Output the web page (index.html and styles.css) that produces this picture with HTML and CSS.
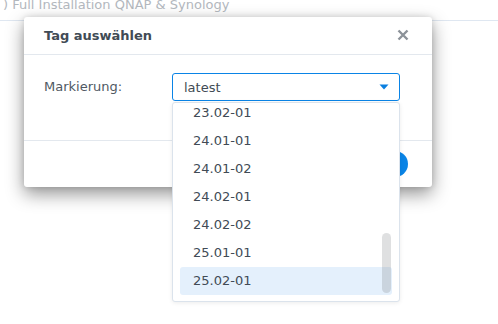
FILE: index.html
```html
<!DOCTYPE html>
<html>
<head>
<meta charset="utf-8">
<link rel="stylesheet" href="styles.css">
</head>
<body>
<div class="page-header"><span class="page-title">) Full Installation QNAP &amp; Synology</span></div>

<div class="dialog">
  <div class="dlg-head">
    <span class="dlg-title">Tag auswählen</span>
    <svg class="close" width="12" height="12" viewBox="0 0 12 12"><path d="M1.5 1.5 L10.5 10.5 M10.5 1.5 L1.5 10.5" stroke="#8c9299" stroke-width="2.4" stroke-linecap="butt"/></svg>
  </div>
  <div class="dlg-body">
    <label class="field-label">Markierung:</label>
    <div class="select">
      <span class="select-value">latest</span>
      <svg class="arrow" width="10" height="6" viewBox="0 0 10 6"><path d="M0.5 0.5 H9.5 L5 5.5 Z" fill="#0a7fe0"/></svg>
    </div>
  </div>
  <div class="dlg-foot">
    <button class="btn-primary">OK</button>
  </div>
</div>

<div class="dropdown">
  <ul class="options">
    <li>23.02-01</li>
    <li>24.01-01</li>
    <li>24.01-02</li>
    <li>24.02-01</li>
    <li>24.02-02</li>
    <li>25.01-01</li>
    <li class="active">25.02-01</li>
  </ul>
  <div class="scrollbar"></div>
</div>
</body>
</html>
```

FILE: styles.css
```css
* { box-sizing: border-box; }
html, body {
  margin: 0;
  padding: 0;
  background: #ffffff;
  width: 498px;
  height: 324px;
  overflow: hidden;
  font-family: "DejaVu Sans", Verdana, sans-serif;
  font-size: 13px;
}
.page-header {
  height: 21px;
  border-bottom: 1px solid #dfe7f1;
  overflow: hidden;
}
.page-title {
  display: block;
  margin-top: -3px;
  padding-left: 3px;
  line-height: 16px;
  color: #b3b8be;
  white-space: nowrap;
}
.dialog {
  position: absolute;
  left: 24px;
  top: 17px;
  width: 408px;
  height: 170px;
  background: #fff;
  border-radius: 3px;
  box-shadow: 0 7px 18px rgba(0, 0, 0, 0.42), 0 0 6px rgba(0, 0, 0, 0.12);
  display: flex;
  flex-direction: column;
}
.dlg-head {
  height: 38px;
  border-bottom: 1px solid #e3e8ee;
  display: flex;
  align-items: center;
  justify-content: space-between;
  padding: 0 23px 1px 20px;
}
.dlg-title {
  font-weight: bold;
  color: #414b55;
}
.close { display: block; }
.dlg-body {
  height: 85px;
  display: flex;
  align-items: flex-start;
  padding: 18px 0 0 20px;
}
.field-label {
  width: 128px;
  line-height: 28px;
  color: #4f5963;
}
.select {
  width: 228px;
  height: 28px;
  border: 1px solid #0a84e6;
  border-radius: 3px;
  display: flex;
  align-items: center;
  justify-content: space-between;
  padding: 0 10px 0 11px;
  color: #414b55;
}
.arrow { display: block; }
.dlg-foot {
  flex: 1;
  border-top: 1px solid #e3e8ee;
  display: flex;
  justify-content: flex-end;
  align-items: flex-start;
  padding: 10px 24px 0 0;
}
.btn-primary {
  height: 26px;
  min-width: 64px;
  border: none;
  border-radius: 13px;
  background: #0a84e6;
  color: #fff;
  font-family: inherit;
  font-size: 13px;
}
.dropdown {
  position: absolute;
  left: 172px;
  top: 102px;
  width: 228px;
  height: 200px;
  background: #fff;
  border: 1px solid #dbe3ec;
  border-radius: 3px;
  box-shadow: 0 1px 4px rgba(0, 0, 0, 0.08);
  overflow: hidden;
}
.options {
  list-style: none;
  margin: -4px 0 0 0;
  padding: 0 7px;
}
.options li {
  height: 28px;
  line-height: 28px;
  padding-left: 13px;
  color: #414b55;
  border-radius: 3px;
}
.options li.active {
  background: #e4f0fc;
}
.scrollbar {
  position: absolute;
  left: 209px;
  top: 130px;
  width: 9px;
  height: 60px;
  border-radius: 5px;
  background: rgba(110, 115, 120, 0.22);
}
```
